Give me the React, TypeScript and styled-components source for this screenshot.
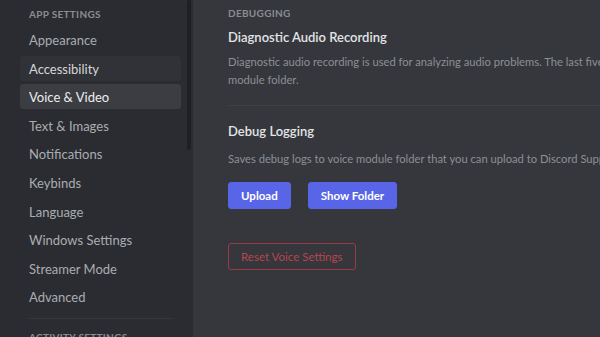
import React from "react";
import styled, { createGlobalStyle } from "styled-components";

const GlobalStyle = createGlobalStyle`
  html, body {
    margin: 0;
    padding: 0;
    background: #35373d;
    font-family: Lato, "Open Sans", sans-serif;
  }
`;

const Page = styled.div`
  display: flex;
  width: 600px;
  height: 337px;
  overflow: hidden;
`;

const Sidebar = styled.nav`
  position: relative;
  flex: 0 0 193px;
  background: #2b2c31;
  padding: 8px 12px 0 20px;
  box-sizing: border-box;
`;

const ScrollThumb = styled.div`
  position: absolute;
  top: 0;
  right: 2px;
  width: 4px;
  height: 150px;
  border-radius: 2px;
  background: #1f2024;
`;

const SectionHeader = styled.div`
  padding: 0 9px;
  height: 14px;
  font-size: 10px;
  font-weight: 700;
  letter-spacing: 0.3px;
  color: #8a8d92;
  text-transform: uppercase;
  margin-bottom: 5px;
`;

const NavItem = styled.div<{ $state?: "hover" | "selected" }>`
  height: 25px;
  line-height: 26px;
  margin-bottom: 3.6px;
  padding: 0 9px;
  border-radius: 3px;
  font-size: 13px;
  color: ${(p) => (p.$state === "selected" ? "#eceded" : p.$state === "hover" ? "#d6d7d9" : "#a9acb0")};
  background: ${(p) =>
    p.$state === "selected" ? "#3b3d43" : p.$state === "hover" ? "#313238" : "transparent"};
`;

const NavDivider = styled.div`
  height: 1px;
  margin: 9px 8px 12px 9px;
  background: #36373c;
`;

const Main = styled.main`
  flex: 1;
  background: #35373d;
  padding: 7px 0 0 35px;
  overflow: hidden;
`;

const Content = styled.div`
  width: 570px;
`;

const Eyebrow = styled.h5`
  margin: 0 0 8px;
  font-size: 10px;
  font-weight: 700;
  letter-spacing: 0.3px;
  color: #8a8d92;
  text-transform: uppercase;
`;

const Title = styled.h3<{ $gap?: number }>`
  margin: 0 0 ${(p) => p.$gap ?? 6}px;
  font-size: 13px;
  font-weight: 600;
  color: #e3e4e6;
  line-height: 20px;
`;

const Description = styled.p`
  margin: 0;
  font-size: 11.2px;
  line-height: 18px;
  color: #8c8f94;
`;

const Divider = styled.hr`
  border: none;
  height: 1px;
  background: #3e4046;
  margin: 16px 0 15px;
  width: 600px;
`;

const ButtonRow = styled.div`
  display: flex;
  gap: 17px;
  margin-top: 14px;
`;

const Button = styled.button<{ $danger?: boolean }>`
  height: 27px;
  padding: 0 12px;
  border-radius: 3px;
  font-family: inherit;
  font-size: 11.5px;
  font-weight: ${(p) => (p.$danger ? 400 : 700)};
  cursor: pointer;
  border: 1px solid ${(p) => (p.$danger ? "#9c3a3f" : "#5865e6")};
  background: ${(p) => (p.$danger ? "transparent" : "#5865e6")};
  color: ${(p) => (p.$danger ? "#b9454a" : "#ffffff")};
`;

const DangerRow = styled.div`
  margin-top: 34px;
`;

const navItems = [
  "Appearance",
  "Accessibility",
  "Voice & Video",
  "Text & Images",
  "Notifications",
  "Keybinds",
  "Language",
  "Windows Settings",
  "Streamer Mode",
  "Advanced",
];

export default function App() {
  return (
    <>
      <GlobalStyle />
      <Page>
        <Sidebar>
          <ScrollThumb />
          <SectionHeader>App Settings</SectionHeader>
          {navItems.map((item) => (
            <NavItem
              key={item}
              $state={item === "Voice & Video" ? "selected" : item === "Accessibility" ? "hover" : undefined}
            >
              {item}
            </NavItem>
          ))}
          <NavDivider />
          <SectionHeader>Activity Settings</SectionHeader>
        </Sidebar>
        <Main>
          <Content>
            <Eyebrow>Debugging</Eyebrow>
            <Title>Diagnostic Audio Recording</Title>
            <Description>
              Diagnostic audio recording is used for analyzing audio problems. The last five minutes of voice is
              saved to voice module folder.
            </Description>
            <Divider />
            <Title $gap={9}>Debug Logging</Title>
            <Description>
              Saves debug logs to voice module folder that you can upload to Discord Support for troubleshooting.
            </Description>
            <ButtonRow>
              <Button>Upload</Button>
              <Button>Show Folder</Button>
            </ButtonRow>
            <DangerRow>
              <Button $danger>Reset Voice Settings</Button>
            </DangerRow>
          </Content>
        </Main>
      </Page>
    </>
  );
}
